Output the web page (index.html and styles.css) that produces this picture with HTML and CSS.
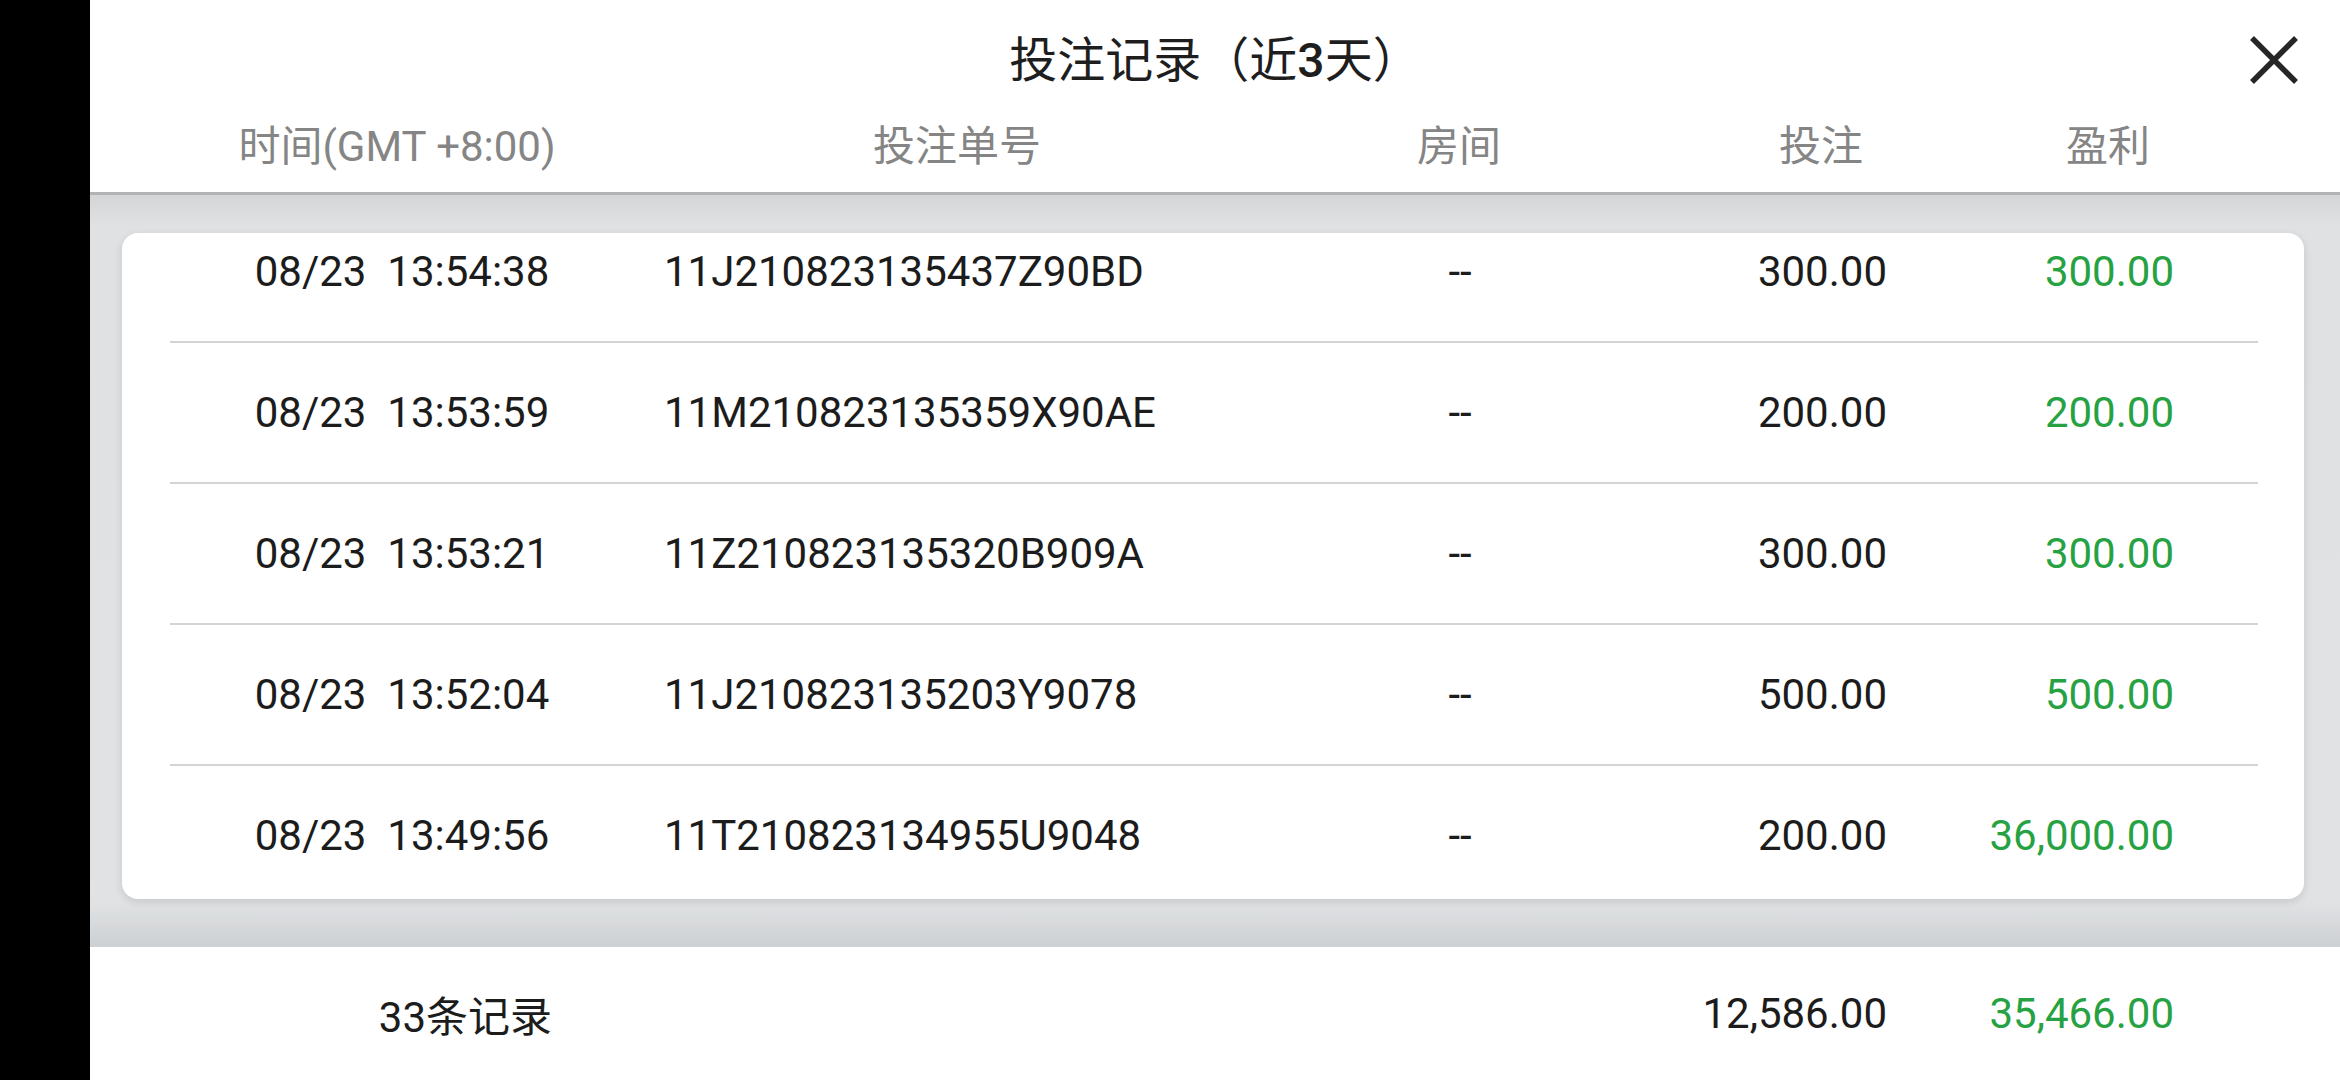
FILE: index.html
```html
<!DOCTYPE html>
<html lang="zh-CN">
<head>
<meta charset="utf-8">
<title>投注记录</title>
<link rel="stylesheet" href="styles.css">
</head>
<body>
<div class="screen">
  <div class="side"></div>
  <div class="panel">
    <header class="top">
      <div class="title">投注记录（近<b>3</b>天）</div>
      <button class="close" aria-label="关闭">
        <svg viewBox="0 0 50 50" width="50" height="50">
          <path d="M3 3 L47 47 M47 3 L3 47" stroke="#262626" stroke-width="5.5" fill="none"/>
        </svg>
      </button>
      <div class="heads">
        <span>时间(GMT +8:00)</span>
        <span>投注单号</span>
        <span>房间</span>
        <span>投注</span>
        <span>盈利</span>
      </div>
    </header>
    <main class="area">
      <div class="card">
        <div class="list">
          <div class="row">
            <span class="c-time">08/23  13:54:38</span>
            <span class="c-id">11J210823135437Z90BD</span>
            <span class="c-room">--</span>
            <span class="c-bet">300.00</span>
            <span class="c-win">300.00</span>
          </div>
          <div class="row">
            <span class="c-time">08/23  13:53:59</span>
            <span class="c-id">11M210823135359X90AE</span>
            <span class="c-room">--</span>
            <span class="c-bet">200.00</span>
            <span class="c-win">200.00</span>
          </div>
          <div class="row">
            <span class="c-time">08/23  13:53:21</span>
            <span class="c-id">11Z210823135320B909A</span>
            <span class="c-room">--</span>
            <span class="c-bet">300.00</span>
            <span class="c-win">300.00</span>
          </div>
          <div class="row">
            <span class="c-time">08/23  13:52:04</span>
            <span class="c-id">11J210823135203Y9078</span>
            <span class="c-room">--</span>
            <span class="c-bet">500.00</span>
            <span class="c-win">500.00</span>
          </div>
          <div class="row">
            <span class="c-time">08/23  13:49:56</span>
            <span class="c-id">11T210823134955U9048</span>
            <span class="c-room">--</span>
            <span class="c-bet">200.00</span>
            <span class="c-win">36,000.00</span>
          </div>
        </div>
      </div>
    </main>
    <footer class="foot">
      <span class="f-count">33条记录</span>
      <span></span>
      <span class="f-bet">12,586.00</span>
      <span class="f-win">35,466.00</span>
    </footer>
  </div>
</div>
</body>
</html>
```
FILE: styles.css
```css
html, body {
  margin: 0;
  padding: 0;
  width: 2340px;
  height: 1080px;
  overflow: hidden;
  background: #000;
}

.screen {
  display: flex;
  width: 2340px;
  height: 1080px;
  font-family: Roboto, "Noto Sans CJK SC", sans-serif;
  color: #1c1c1c;
}

.side {
  width: 90px;
  flex: none;
  background: #000;
}

.panel {
  flex: 1;
  display: flex;
  flex-direction: column;
  background: #fff;
  min-width: 0;
}

.top {
  position: relative;
  height: 192px;
  flex: none;
  border-bottom: 3px solid #b3b3b3;
  background: #fff;
}

.title {
  padding-top: 20px;
  height: 82px;
  line-height: 82px;
  text-align: center;
  font-size: 48px;
  font-weight: 400;
  color: #1e1e1e;
}

.title b {
  font-weight: 500;
}

.close {
  position: absolute;
  top: 35px;
  right: 41px;
  width: 50px;
  height: 50px;
  padding: 0;
  border: 0;
  background: none;
}

.close svg {
  display: block;
}

.heads {
  display: grid;
  grid-template-columns: 614px 506px 498px 226px 348px 1fr;
  height: 90px;
  line-height: 90px;
  font-size: 42px;
  color: #858585;
  text-align: center;
  white-space: nowrap;
}

.area {
  flex: 1;
  display: flex;
  flex-direction: column;
  padding: 38px 36px 48px 32px;
  background: linear-gradient(to bottom, #d3d5d7 0px, #dfe1e3 30px, #e0e2e4 calc(100% - 45px), #cdd0d2 100%);
  min-height: 0;
}

.card {
  flex: 1;
  background: #fff;
  border-radius: 16px;
  overflow: hidden;
  box-shadow: 0 3px 8px rgba(0, 0, 0, 0.12);
}

.list {
  margin: -31px 46px 0 48px;
}

.row {
  display: grid;
  grid-template-columns: 464px 666px 320px 267px 287px 1fr;
  height: 141px;
  box-sizing: border-box;
  border-bottom: 2px solid #d4d4d4;
  align-items: center;
  font-size: 42px;
  white-space: pre;
}

.c-time { text-align: center; }
.c-id { padding-left: 30px; }
.c-room { text-align: center; }
.c-bet { text-align: right; }
.c-win { text-align: right; color: #27a243; }

.foot {
  flex: none;
  height: 133px;
  display: grid;
  grid-template-columns: 470px 1060px 267px 287px 1fr;
  align-items: center;
  font-size: 42px;
  white-space: nowrap;
  background: #fff;
}

.f-count { text-align: right; padding-right: 8px; }
.f-bet { text-align: right; }
.f-win { text-align: right; color: #27a243; }
```
